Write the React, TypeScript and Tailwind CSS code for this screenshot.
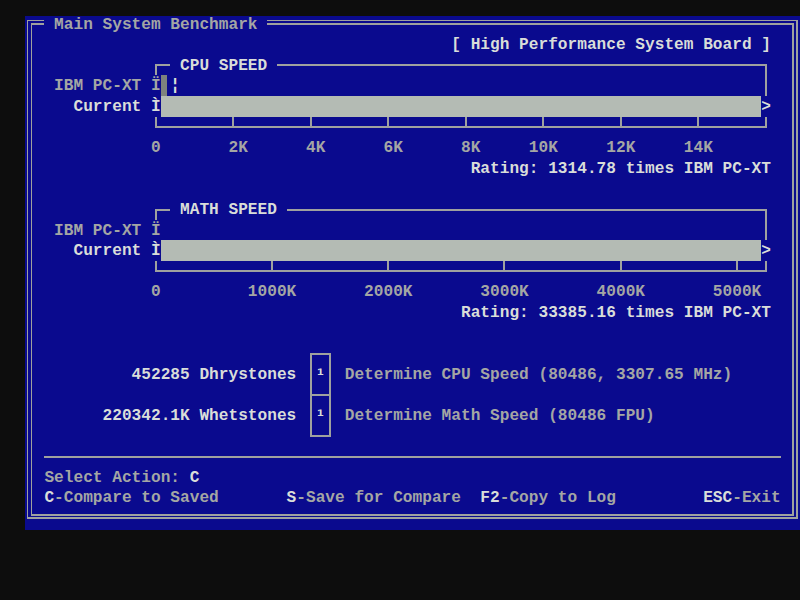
import React from "react";

// text-mode screen: 80 x 25 cells
const COLS = 80;
const ROWS = 25;

type Fg = "w" | "g";
type Cell = { ch: string; fg: Fg };

const buildScreen = (): Cell[][] => {
  const g: Cell[][] = Array.from({ length: ROWS }, () =>
    Array.from({ length: COLS }, () => ({ ch: " ", fg: "g" as Fg }))
  );
  const put = (r: number, c: number, s: string, fg: Fg = "g") => {
    [...s].forEach((ch, i) => {
      if (c + i < COLS) g[r][c + i] = { ch, fg };
    });
  };
  const fill = (r: number, c0: number, c1: number, ch: string, fg: Fg = "g") => {
    for (let c = c0; c <= c1; c++) put(r, c, ch, fg);
  };

  // outer frame
  put(0, 0, "╔");
  fill(0, 1, 78, "═");
  put(0, 79, "╗");
  put(0, 2, " Main System Benchmark ");
  for (let r = 1; r < 24; r++) {
    put(r, 0, "║");
    put(r, 79, "║");
  }
  put(24, 0, "╚");
  fill(24, 1, 78, "═");
  put(24, 79, "╝");

  put(1, 44, "[ High Performance System Board ]", "w");

  const chart = (
    top: number,
    title: string,
    ticks: number[],
    labels: [string, number][],
    rating: string
  ) => {
    put(top, 13, "┌");
    put(top, 14, "─");
    put(top, 16, title, "w");
    fill(top, 16 + title.length + 1, 75, "─");
    put(top, 76, "┐");

    put(top + 1, 3, "IBM PC-XT");
    put(top + 1, 13, "Ï");
    put(top + 1, 76, "│");

    put(top + 2, 5, "Current", "w");
    put(top + 2, 13, "Ì", "w");
    fill(top + 2, 14, 75, "█");
    put(top + 2, 76, ">", "w");

    put(top + 3, 13, "└");
    fill(top + 3, 14, 75, "─");
    ticks.forEach((c) => put(top + 3, c, "┴"));
    put(top + 3, 76, "┘");

    put(top + 4, 13, "0");
    labels.forEach(([s, c]) => put(top + 4, c, s));

    put(top + 5, 77 - rating.length, rating, "w");
  };

  chart(
    2,
    "CPU SPEED",
    [21, 29, 37, 45, 53, 61, 69],
    [["2K", 21], ["4K", 29], ["6K", 37], ["8K", 45], ["10K", 52], ["12K", 60], ["14K", 68]],
    "Rating: 1314.78 times IBM PC-XT"
  );
  put(3, 14, "▌");
  put(3, 15, "¦", "w");

  chart(
    9,
    "MATH SPEED",
    [25, 37, 49, 61, 73],
    [["1000K", 23], ["2000K", 35], ["3000K", 47], ["4000K", 59], ["5000K", 71]],
    "Rating: 33385.16 times IBM PC-XT"
  );

  // test list
  put(16, 29, "┌─┐");
  put(17, 11, "452285 Dhrystones", "w");
  put(17, 29, "│");
  put(17, 30, "¹", "w");
  put(17, 31, "│");
  put(17, 33, "Determine CPU Speed (80486, 3307.65 MHz)");
  put(18, 29, "├─┤");
  put(19, 8, "220342.1K Whetstones", "w");
  put(19, 29, "│");
  put(19, 30, "¹", "w");
  put(19, 31, "│");
  put(19, 33, "Determine Math Speed (80486 FPU)");
  put(20, 29, "└─┘");

  // footer
  fill(21, 2, 77, "─");
  put(22, 2, "Select Action: ");
  put(22, 17, "C", "w");
  put(23, 2, "C", "w");
  put(23, 3, "-Compare to Saved");
  put(23, 27, "S", "w");
  put(23, 28, "-Save for Compare");
  put(23, 47, "F2", "w");
  put(23, 49, "-Copy to Log");
  put(23, 70, "ESC", "w");
  put(23, 73, "-Exit");

  return g;
};

// single-line strokes
const SL = "left-0 w-[5.6px] top-[9.5px] h-[2px]";
const SR = "left-[3.6px] right-0 top-[9.5px] h-[2px]";
const SU = "left-[3.6px] w-[2px] top-0 h-[11.5px]";
const SD = "left-[3.6px] w-[2px] top-[9.5px] bottom-0";
const SV = "left-[3.6px] w-[2px] top-0 bottom-0";

// box glyphs as stroke lists
const BOX: Record<string, string[]> = {
  "─": ["left-0 right-0 top-[9.5px] h-[2px]"],
  "│": [SV],
  "┌": [SR, SD],
  "┐": [SL, SD],
  "└": [SU, SR],
  "┘": [SU, SL],
  "┴": [SU, SL, SR],
  "├": [SV, SR],
  "┤": [SV, SL],
  "═": ["left-0 right-0 top-[6px] h-[1.6px]", "left-0 right-0 top-[9.4px] h-[1.6px]"],
  "║": ["left-[1.7px] w-[1.6px] top-0 bottom-0", "left-[5.7px] w-[1.6px] top-0 bottom-0"],
  "╔": [
    "left-[1.7px] right-0 top-[6px] h-[1.6px]",
    "left-[1.7px] w-[1.6px] top-[6px] bottom-0",
    "left-[5.7px] right-0 top-[9.4px] h-[1.6px]",
    "left-[5.7px] w-[1.6px] top-[9.4px] bottom-0",
  ],
  "╗": [
    "left-0 w-[7.3px] top-[6px] h-[1.6px]",
    "left-[5.7px] w-[1.6px] top-[6px] bottom-0",
    "left-0 w-[3.3px] top-[9.4px] h-[1.6px]",
    "left-[1.7px] w-[1.6px] top-[9.4px] bottom-0",
  ],
  "╚": [
    "left-[1.7px] w-[1.6px] top-0 h-[11px]",
    "left-[1.7px] right-0 top-[9.4px] h-[1.6px]",
    "left-[5.7px] w-[1.6px] top-0 h-[7.6px]",
    "left-[5.7px] right-0 top-[6px] h-[1.6px]",
  ],
  "╝": [
    "left-[5.7px] w-[1.6px] top-0 h-[11px]",
    "left-0 w-[7.3px] top-[9.4px] h-[1.6px]",
    "left-[1.7px] w-[1.6px] top-0 h-[7.6px]",
    "left-0 w-[3.3px] top-[6px] h-[1.6px]",
  ],
};

const Glyph: React.FC<{ cell: Cell }> = ({ cell }) => {
  const { ch, fg } = cell;
  if (BOX[ch]) {
    return (
      <div className="relative w-[9.6875px] h-full shrink-0">
        {BOX[ch].map((s, i) => (
          <div key={i} className={"absolute bg-[#9fa19f] " + s} />
        ))}
      </div>
    );
  }
  if (ch === "█") {
    return <div className="w-[9.6875px] h-full shrink-0 bg-[#b4bbb4]" />;
  }
  if (ch === "▌") {
    return (
      <div className="w-[9.6875px] h-full shrink-0">
        <div className="w-[6.8px] h-full bg-[#7e837e]" />
      </div>
    );
  }
  return (
    <span
      className={
        "block w-[9.6875px] h-full shrink-0 text-center whitespace-pre leading-[22.6px] " +
        (fg === "w" ? "text-[#d9ddd9]" : "text-[#a4a6a4]")
      }
    >
      {ch}
    </span>
  );
};

const screen = buildScreen();

const App: React.FC = () => {
  return (
    <div className="w-[800px] h-[600px] bg-[#0d0d0d] pt-4 pl-[25px] overflow-hidden">
      <div className="w-[775px] h-[514px] bg-[#0a0a8e] overflow-hidden font-['Liberation_Mono',monospace] font-bold text-[16.14px]">
        {screen.map((row, r) => (
          <div key={r} className={"flex h-[20.6px] " + (r === 0 ? "-mt-[2.3px]" : "")}>
            {row.map((cell, c) => (
              <Glyph key={c} cell={cell} />
            ))}
          </div>
        ))}
      </div>
    </div>
  );
};

export default App;
